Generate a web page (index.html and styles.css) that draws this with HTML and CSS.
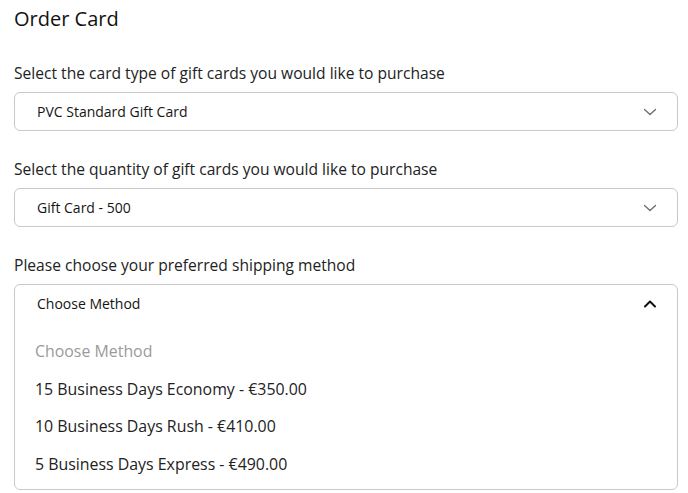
FILE: index.html
```html
<!DOCTYPE html>
<html>
<head>
<meta charset="utf-8">
<link rel="stylesheet" href="styles.css">
</head>
<body>
<div class="page">
  <h1 class="title">Order Card</h1>
  <div class="field">
    <div class="label">Select the card type of gift cards you would like to purchase</div>
    <div class="select">
      <span class="value">PVC Standard Gift Card</span>
      <svg class="chev" width="14" height="8" viewBox="0 0 14 8"><path d="M1.5 1.5 L7 6.5 L12.5 1.5" fill="none" stroke="#6b6b6b" stroke-width="1.3" stroke-linecap="round" stroke-linejoin="round"/></svg>
    </div>
  </div>
  <div class="field">
    <div class="label">Select the quantity of gift cards you would like to purchase</div>
    <div class="select">
      <span class="value">Gift Card - 500</span>
      <svg class="chev" width="14" height="8" viewBox="0 0 14 8"><path d="M1.5 1.5 L7 6.5 L12.5 1.5" fill="none" stroke="#6b6b6b" stroke-width="1.3" stroke-linecap="round" stroke-linejoin="round"/></svg>
    </div>
  </div>
  <div class="field">
    <div class="label">Please choose your preferred shipping method</div>
    <div class="select open">
      <div class="head">
        <span class="value">Choose Method</span>
        <svg class="chev" width="14" height="8" viewBox="0 0 14 8"><path d="M2 6.5 L7 1.5 L12 6.5" fill="none" stroke="#111" stroke-width="2" stroke-linecap="round" stroke-linejoin="round"/></svg>
      </div>
      <ul class="options">
        <li class="placeholder">Choose Method</li>
        <li>15 Business Days Economy - €350.00</li>
        <li>10 Business Days Rush - €410.00</li>
        <li>5 Business Days Express - €490.00</li>
      </ul>
    </div>
  </div>
</div>
</body>
</html>
```

FILE: styles.css
```css
* { box-sizing: border-box; }
html, body { margin: 0; padding: 0; background: #fff; }
body {
  font-family: "Open Sans", "Liberation Sans", sans-serif;
  color: #1a1a1a;
}
.page {
  padding: 6px 10px 0 14px;
}
.title {
  margin: 0 0 31px;
  font-size: 20px;
  line-height: 26px;
  font-weight: 500;
  color: #111;
}
.field { margin-bottom: 28px; }
.field:last-child { margin-bottom: 0; }
.label {
  font-size: 15.6px;
  line-height: 20px;
  margin-bottom: 9px;
  color: #222;
}
.select {
  border: 1px solid #c9c9c9;
  border-radius: 6px;
  height: 39px;
  display: flex;
  align-items: center;
  justify-content: space-between;
  padding: 0 20px 0 22px;
}
.value {
  font-size: 14px;
  font-weight: 500;
  color: #151515;
}
.select.open {
  height: auto;
  display: block;
  padding: 0;
}
.head {
  height: 37px;
  display: flex;
  align-items: center;
  justify-content: space-between;
  padding: 0 20px 0 22px;
}
.options {
  list-style: none;
  margin: 11px 0 0;
  padding: 0 0 5px 20px;
}
.options li {
  font-size: 15.9px;
  line-height: 37.7px;
  color: #222;
}
.options li.placeholder { color: #9a9a9a; }
```
